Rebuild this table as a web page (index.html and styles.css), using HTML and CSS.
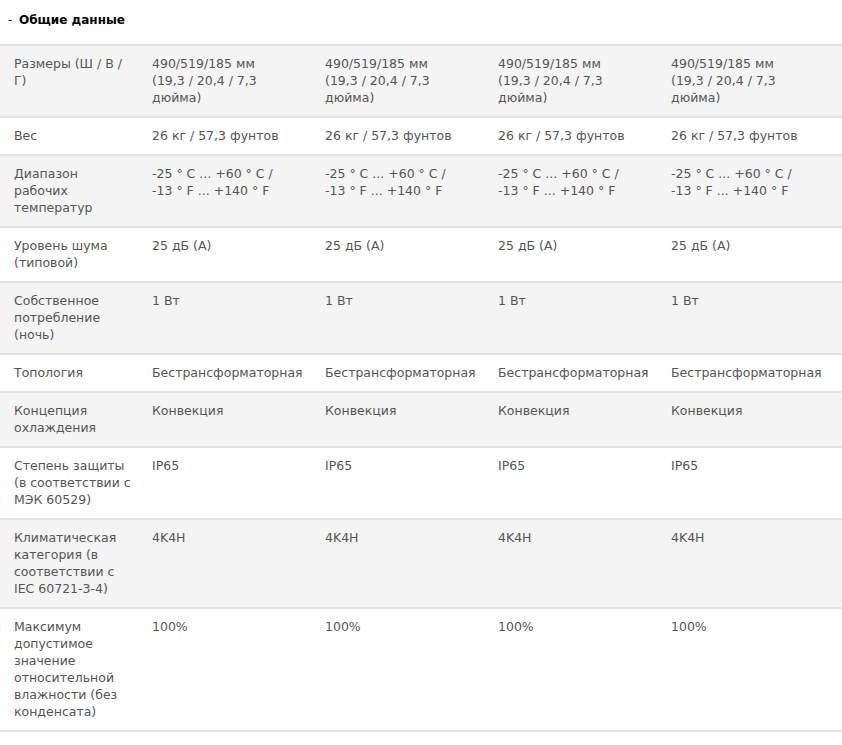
FILE: index.html
```html
<!DOCTYPE html>
<html lang="ru">
<head>
<meta charset="utf-8">
<title>Общие данные</title>
<link rel="stylesheet" href="styles.css">
</head>
<body>
<div class="section">
  <h3 class="section-title"><span class="toggle">-</span>Общие данные</h3>
  <table class="specs">
    <colgroup>
      <col class="col-label">
      <col class="col-val">
      <col class="col-val">
      <col class="col-val">
      <col class="col-last">
    </colgroup>
    <tbody>
      <tr class="odd">
        <td>Размеры (Ш / В / Г)</td>
        <td>490/519/185 мм (19,3 / 20,4 / 7,3 дюйма)</td>
        <td>490/519/185 мм (19,3 / 20,4 / 7,3 дюйма)</td>
        <td>490/519/185 мм (19,3 / 20,4 / 7,3 дюйма)</td>
        <td>490/519/185 мм (19,3 / 20,4 / 7,3 дюйма)</td>
      </tr>
      <tr>
        <td>Вес</td>
        <td>26 кг / 57,3 фунтов</td>
        <td>26 кг / 57,3 фунтов</td>
        <td>26 кг / 57,3 фунтов</td>
        <td>26 кг / 57,3 фунтов</td>
      </tr>
      <tr class="odd">
        <td>Диапазон рабочих температур</td>
        <td>-25 ° C ... +60 ° C / -13 ° F ... +140 ° F</td>
        <td>-25 ° C ... +60 ° C / -13 ° F ... +140 ° F</td>
        <td>-25 ° C ... +60 ° C / -13 ° F ... +140 ° F</td>
        <td>-25 ° C ... +60 ° C / -13 ° F ... +140 ° F</td>
      </tr>
      <tr>
        <td>Уровень шума (типовой)</td>
        <td>25 дБ (A)</td>
        <td>25 дБ (A)</td>
        <td>25 дБ (A)</td>
        <td>25 дБ (A)</td>
      </tr>
      <tr class="odd">
        <td>Собственное потребление (ночь)</td>
        <td>1 Вт</td>
        <td>1 Вт</td>
        <td>1 Вт</td>
        <td>1 Вт</td>
      </tr>
      <tr>
        <td>Топология</td>
        <td>Бестрансформаторная</td>
        <td>Бестрансформаторная</td>
        <td>Бестрансформаторная</td>
        <td>Бестрансформаторная</td>
      </tr>
      <tr class="odd">
        <td>Концепция охлаждения</td>
        <td>Конвекция</td>
        <td>Конвекция</td>
        <td>Конвекция</td>
        <td>Конвекция</td>
      </tr>
      <tr>
        <td>Степень защиты (в соответствии с МЭК 60529)</td>
        <td>IP65</td>
        <td>IP65</td>
        <td>IP65</td>
        <td>IP65</td>
      </tr>
      <tr class="odd">
        <td>Климатическая категория (в соответствии с IEC 60721-3-4)</td>
        <td>4K4H</td>
        <td>4K4H</td>
        <td>4K4H</td>
        <td>4K4H</td>
      </tr>
      <tr>
        <td>Максимум допустимое значение относительной влажности (без конденсата)</td>
        <td>100%</td>
        <td>100%</td>
        <td>100%</td>
        <td>100%</td>
      </tr>
    </tbody>
  </table>
</div>
</body>
</html>
```

FILE: styles.css
```css
html, body {
  margin: 0;
  padding: 0;
  background: #fff;
}

body {
  font-family: "DejaVu Sans", Verdana, sans-serif;
  font-size: 12.5px;
  line-height: 17px;
  color: #555;
}

.section {
  padding-top: 12px;
}

.section-title {
  margin: 0 0 15px 0;
  padding-left: 8px;
  font-size: 12px;
  line-height: 17px;
  font-weight: bold;
  color: #000;
}

.toggle {
  display: inline-block;
  width: 11px;
  font-weight: normal;
}

.specs {
  width: 842px;
  border-collapse: collapse;
  table-layout: fixed;
  border-top: 2px solid #e2e2e2;
}

.col-label { width: 138px; }
.col-val { width: 173px; }
.col-last { width: 185px; }

.specs td {
  vertical-align: top;
  padding: 9px 31px 10px 14px;
  border-bottom: 2px solid #e2e2e2;
}

.specs td:first-child {
  padding-right: 4px;
}

.specs td:last-child {
  padding-right: 43px;
}

.specs tr.odd td {
  background: #f4f4f4;
}
```
